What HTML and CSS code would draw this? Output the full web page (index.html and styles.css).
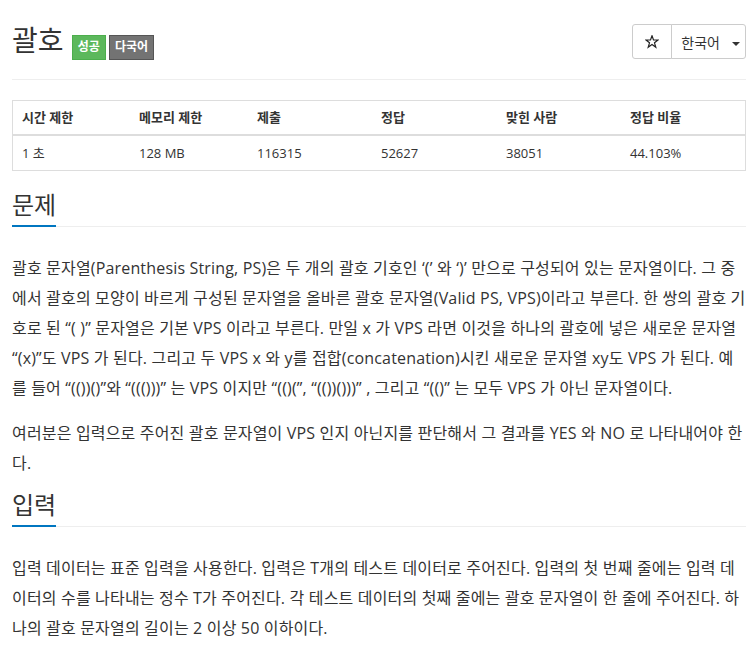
FILE: index.html
```html
<!DOCTYPE html>
<html lang="ko">
<head>
    <meta charset="UTF-8">
    <title>괄호</title>
    <link rel="stylesheet" href="styles.css">
</head>
<body>
    <div class="container">
        <div class="page-header">
            <h1 class="problem-title">괄호 <span class="label label-success">성공</span><span class="label label-default">다국어</span></h1>
            <div class="btn-group">
                <button class="btn btn-star">
                    <svg width="14" height="14" viewBox="0 0 14 14">
                        <polygon points="7,0.8 8.5,4.9 13,5 9.5,7.8 10.8,12.3 7,9.6 3.2,12.3 4.5,7.8 1,5 5.5,4.9" fill="none" stroke="#222" stroke-width="1.2" stroke-linejoin="miter"/>
                    </svg>
                </button>
                <button class="btn btn-lang">한국어 <span class="caret"></span></button>
            </div>
        </div>

        <table class="problem-info">
            <thead>
                <tr>
                    <th class="col-time">시간 제한</th>
                    <th class="col-mem">메모리 제한</th>
                    <th class="col-submit">제출</th>
                    <th class="col-ac">정답</th>
                    <th class="col-users">맞힌 사람</th>
                    <th>정답 비율</th>
                </tr>
            </thead>
            <tbody>
                <tr>
                    <td>1 초</td>
                    <td>128 MB</td>
                    <td>116315</td>
                    <td>52627</td>
                    <td>38051</td>
                    <td>44.103%</td>
                </tr>
            </tbody>
        </table>

        <section class="problem-section">
            <h2 class="headline"><span>문제</span></h2>
            <div class="problem-text">
                <p>괄호 문자열(Parenthesis String, PS)은 두 개의 괄호 기호인 ‘(’ 와 ‘)’ 만으로 구성되어 있는 문자열이다. 그 중에서 괄호의 모양이 바르게 구성된 문자열을 올바른 괄호 문자열(Valid PS, VPS)이라고 부른다. 한 쌍의 괄호 기호로 된 “( )” 문자열은 기본 VPS 이라고 부른다. 만일 x 가 VPS 라면 이것을 하나의 괄호에 넣은 새로운 문자열 “(x)”도 VPS 가 된다. 그리고 두 VPS x 와 y를 접합(concatenation)시킨 새로운 문자열 xy도 VPS 가 된다. 예를 들어 “(())()”와 “((()))” 는 VPS 이지만 “(()(”, “(())()))” , 그리고 “(()” 는 모두 VPS 가 아닌 문자열이다.</p>
                <p>여러분은 입력으로 주어진 괄호 문자열이 VPS 인지 아닌지를 판단해서 그 결과를 YES 와 NO 로 나타내어야 한다.</p>
            </div>
        </section>

        <section class="problem-section">
            <h2 class="headline"><span>입력</span></h2>
            <div class="problem-text">
                <p>입력 데이터는 표준 입력을 사용한다. 입력은 T개의 테스트 데이터로 주어진다. 입력의 첫 번째 줄에는 입력 데이터의 수를 나타내는 정수 T가 주어진다. 각 테스트 데이터의 첫째 줄에는 괄호 문자열이 한 줄에 주어진다. 하나의 괄호 문자열의 길이는 2 이상 50 이하이다.</p>
            </div>
        </section>
    </div>
</body>
</html>
```

FILE: styles.css
```css
body {
    margin: 0;
    font-family: "Open Sans", "Noto Sans CJK KR", sans-serif;
    color: #333;
    background: #fff;
}

.container {
    width: 734px;
    margin-left: 12px;
}

.page-header {
    display: flex;
    justify-content: space-between;
    align-items: center;
    padding: 23px 0 19px;
    border-bottom: 1px solid #eee;
}

.problem-title {
    margin: 0;
    font-size: 28px;
    font-weight: normal;
    line-height: 35px;
}

.label {
    display: inline-block;
    padding: 4px 5px 5px;
    font-size: 12px;
    font-weight: bold;
    line-height: 14px;
    color: #fff;
    vertical-align: baseline;
}

.label-success {
    margin-left: 1px;
    background: #5cb85c;
    border: 1px solid #4cae4c;
}

.label-default {
    margin-left: 3px;
    background: #737373;
    border: 1px solid #555;
}

.btn-group {
    display: flex;
    height: 35px;
}

.btn {
    font-family: inherit;
    font-size: 14px;
    color: #333;
    background: #fff;
    border: 1px solid #ccc;
    margin: 0;
    padding: 0;
}

.btn-star {
    display: flex;
    align-items: center;
    justify-content: center;
    width: 40px;
    border-radius: 3px 0 0 3px;
}

.btn-lang {
    width: 75px;
    margin-left: -1px;
    padding-left: 4px;
    border-radius: 0 3px 3px 0;
}

.caret {
    display: inline-block;
    width: 0;
    height: 0;
    margin-left: 8px;
    vertical-align: middle;
    border-top: 4px solid #333;
    border-left: 4px solid transparent;
    border-right: 4px solid transparent;
}

.problem-info {
    width: 100%;
    margin-top: 20px;
    border-collapse: collapse;
    border: 1px solid #ddd;
    font-size: 13px;
}

.problem-info th,
.problem-info td {
    padding: 8px 9px;
    line-height: 18px;
    text-align: left;
}

.problem-info th {
    padding-top: 7px;
    font-weight: bold;
    border-bottom: 2px solid #ddd;
}

.col-time { width: 99px; }
.col-mem { width: 100px; }
.col-submit { width: 106px; }
.col-ac { width: 107px; }
.col-users { width: 106px; }

.problem-section {
    margin-top: 19px;
}

.problem-section + .problem-section {
    margin-top: 12px;
}

.headline {
    margin: 0;
    font-size: 24px;
    font-weight: normal;
    line-height: 30px;
    border-bottom: 1px solid #eee;
}

.headline span {
    display: inline-block;
    padding-bottom: 5px;
    margin-bottom: -1px;
    border-bottom: 2px solid #0076c0;
}

.problem-text {
    margin-top: 26px;
    font-size: 16px;
    line-height: 30px;
    letter-spacing: 0.17px;
}

.problem-text p {
    margin: 0 0 15px;
}

.problem-text p:last-child {
    margin-bottom: 0;
}
```
